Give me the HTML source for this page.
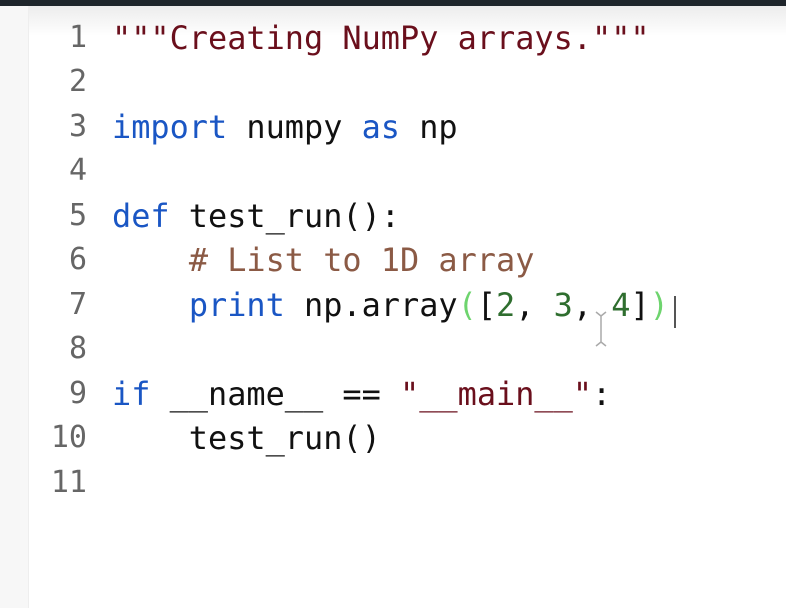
<!DOCTYPE html>
<html><head><style>
body{margin:0;width:786px;height:608px;overflow:hidden;background:#fff;position:relative;font-family:"DejaVu Sans Mono","Liberation Mono",monospace;}
.top{position:absolute;left:0;top:0;width:786px;height:6px;background:#1e252b;}
.shade{position:absolute;left:0;top:6px;width:786px;height:30px;background:linear-gradient(#ececec,#fff);}
.strip{position:absolute;left:0;top:6px;width:28px;height:602px;background:#f7f7f7;border-right:1px solid #eee;}
.ln{position:absolute;left:30px;width:57px;text-align:right;font-size:30px;color:#666;}
.code{position:absolute;left:112px;font-size:31.9px;color:#111;white-space:pre;}
.s{color:#6a0f1c}.k{color:#1a56c4}.c{color:#8b5a45}.n{color:#2f6e2f}.p{color:#6ed46e}
.cur{position:absolute;left:674px;top:296px;width:2px;height:32px;background:#555;}
</style></head><body>
<div class="top"></div><div class="shade"></div><div class="strip"></div>
<div class="ln" style="top:20px">1</div>
<div class="ln" style="top:64px">2</div>
<div class="ln" style="top:109px">3</div>
<div class="ln" style="top:153px">4</div>
<div class="ln" style="top:198px">5</div>
<div class="ln" style="top:242px">6</div>
<div class="ln" style="top:287px">7</div>
<div class="ln" style="top:331px">8</div>
<div class="ln" style="top:376px">9</div>
<div class="ln" style="top:420px">10</div>
<div class="ln" style="top:465px">11</div>
<div class="code" style="top:19px"><span class="s">"""Creating NumPy arrays."""</span></div>
<div class="code" style="top:108px"><span class="k">import</span> numpy <span class="k">as</span> np</div>
<div class="code" style="top:197px"><span class="k">def</span> test_run():</div>
<div class="code" style="top:241px">    <span class="c"># List to 1D array</span></div>
<div class="code" style="top:286px">    <span class="k">print</span> np.array<span class="p">(</span>[<span class="n">2</span>, <span class="n">3</span>, <span class="n">4</span>]<span class="p">)</span></div>
<div class="code" style="top:375px"><span class="k">if</span> __name__ == <span class="s">"__main__"</span>:</div>
<div class="code" style="top:419px">    test_run()</div>
<div class="cur"></div>
<svg style="position:absolute;left:594px;top:310px" width="14" height="38"><path d="M2 2 L7 6 L12 2 M7 6 V32 M2 36 L7 32 L12 36" stroke="#aaa" stroke-width="1.5" fill="none"/></svg>
</body></html>
